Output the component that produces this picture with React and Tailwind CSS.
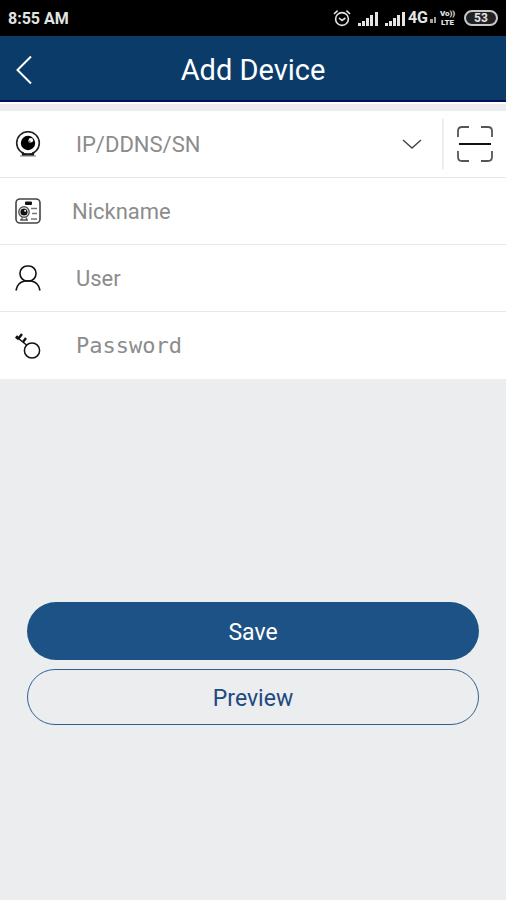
import React from "react";

function StatusBar() {
  return (
    <div className="flex h-9 items-center justify-between bg-black pl-2 pr-2 text-[#e4e4e4]">
      <span className="pt-px text-[16px] leading-5 font-bold">8:55 AM</span>
      <div className="flex items-center">
        <svg className="mr-[7px] h-[18px] w-[18px]" viewBox="0 0 18 18" fill="none" stroke="currentColor" strokeWidth="1.6">
          <circle cx="9" cy="10" r="6.4" />
          <path d="M1 5 4.6 1.6M17 5 13.4 1.6M6 9l3 2.4L12.4 9" />
        </svg>
        <SignalBars />
        <SignalBars />
        <span className="-ml-1 text-[16px] leading-5 font-bold">4G</span>
        <svg className="mx-[2px] mt-1 h-2 w-[7px]" viewBox="0 0 7 8" fill="#a0a0a0">
          <path d="M0 3h3v4H0zM4 1h2v6H4z" />
        </svg>
        <span className="mr-2 flex w-[17px] flex-col items-center text-[8px] leading-[9px] font-black">
          <span>Vo))</span>
          <span>LTE</span>
        </span>
        <span className="flex h-4 w-[34px] items-center justify-center rounded-full border-2 border-[#c8c8c8] bg-[#222] text-[12px] leading-3 font-bold">
          53
        </span>
      </div>
    </div>
  );
}

function SignalBars() {
  return (
    <svg className="mr-[7px] h-[15px] w-5" viewBox="0 0 20 15" fill="currentColor">
      <path d="M0 12h3v3H0zM4 10h3v5H4zM8 7h3v8H8zM12 4h3v11h-3zM17 1h3v14h-3z" />
    </svg>
  );
}

function CameraIcon() {
  return (
    <svg className="h-[26px] w-[26px]" viewBox="0 0 26 26" fill="none">
      <path d="M5 25h16" stroke="#aaa" strokeWidth="1.6" />
      <path d="M7 23.5h12M8 21l-.5 2.500M18 21l.5 2.500" stroke="#111" strokeWidth="1.8" />
      <circle cx="13" cy="12" r="11.3" stroke="#222" strokeWidth="1.6" />
      <circle cx="13" cy="12" r="7.2" fill="#000" />
      <circle cx="15.8" cy="9.2" r="2.3" fill="#fff" />
      <circle cx="14.4" cy="10.6" r="1.2" fill="#777" />
    </svg>
  );
}

function CardIcon() {
  return (
    <svg className="h-[26px] w-[26px]" viewBox="0 0 26 26" fill="none">
      <rect x="1" y="1" width="24" height="24" rx="4" stroke="#444" strokeWidth="1.6" />
      <rect x="10" y="3.5" width="7" height="3.5" rx="1" fill="#111" />
      <circle cx="9" cy="14" r="5.2" stroke="#555" strokeWidth="1.4" />
      <circle cx="9" cy="14" r="3.6" fill="#111" />
      <circle cx="10.2" cy="12.8" r="1" fill="#fff" />
      <path d="M5 22h8M7 19.5v2M11.5 19.5v2" stroke="#555" strokeWidth="1.4" />
      <path d="M16 10.5h6M17 15.5h5M16 21h6" stroke="#777" strokeWidth="1.4" />
    </svg>
  );
}

function UserIcon() {
  return (
    <svg className="h-[26px] w-[26px]" viewBox="0 0 26 26" fill="none" stroke="#111" strokeWidth="1.6">
      <rect x="5" y="1" width="16" height="15" rx="7.2" />
      <path d="M1 25.5C2 19.500 6 16.500 10 16h6c4 .5 8 3.500 9 9.500" />
    </svg>
  );
}

function KeyIcon() {
  return (
    <svg className="h-[26px] w-[26px]" viewBox="0 0 26 26" fill="none" stroke="#111" strokeWidth="1.5">
      <circle cx="17" cy="17.500" r="7.600" />
      <path d="M1 3.500 11.500 12" />
      <path d="M3.500 5.500 7 1M8 9 11 5" strokeWidth="2.400" />
      <path d="M1 3.500 4 6" strokeWidth="3" />
    </svg>
  );
}

const inputStyle =
  "h-full min-w-0 flex-1 bg-transparent text-[22px] text-[#444] outline-none placeholder:text-[#8c8c8c] placeholder:opacity-100";

function Field({ id, icon, type = "text", placeholder, indent = "pl-[35px]", font = "", children }) {
  return (
    <div className="flex h-[67px] items-center border-b border-[#e6e8e9] pl-[15px] last:border-b-0">
      <label htmlFor={id} aria-label={placeholder}>
        {icon}
      </label>
      <input id={id} type={type} placeholder={placeholder} className={`${inputStyle} ${indent} ${font}`} />
      {children}
    </div>
  );
}

export default function App() {
  return (
    <div className="flex min-h-screen flex-col bg-[#ebedef] font-['Roboto',sans-serif]">
      <StatusBar />
      <header className="grid h-[66px] grid-cols-[48px_1fr_48px] items-center border-b-2 border-[#06115c] bg-[#0b3b69] text-white">
        <button type="button" aria-label="Back" className="flex h-full items-center pt-1 pl-4">
          <svg className="h-[30px] w-4" viewBox="0 0 16 30" fill="none" stroke="currentColor" strokeWidth="2">
            <path d="M15 1.500 1.500 15 15 28.500" />
          </svg>
        </button>
        <h1 className="pt-1 text-center text-[29px] leading-9">Add Device</h1>
      </header>
      <form className="flex flex-1 flex-col border-t-2 border-white" onSubmit={(e) => e.preventDefault()}>
        <div className="border-t-[7px] border-[#ebedef] bg-white">
          <Field id="address" icon={<CameraIcon />} placeholder="IP/DDNS/SN">
            <button type="button" aria-label="Saved devices" className="flex h-full w-[60px] items-center justify-center">
              <svg className="h-[10px] w-5" viewBox="0 0 20 10" fill="none" stroke="#444" strokeWidth="1.400">
                <path d="M1 1l9 8 9-8" />
              </svg>
            </button>
            <button type="button" aria-label="Scan code" className="flex h-[50px] w-16 items-center justify-center border-l-2 border-[#eceeef]">
              <svg className="h-9 w-9" viewBox="0 0 36 36" fill="none" stroke="#555" strokeWidth="1.800">
                <path d="M1 11V5q0-4 4-4h7M24 1h7q4 0 4 4v6M1 25v6q0 4 4 4h7M24 35h7q4 0 4-4v-6" />
                <path d="M2 18h32" stroke="#111" strokeWidth="2" />
              </svg>
            </button>
          </Field>
          <Field id="nickname" icon={<CardIcon />} placeholder="Nickname" indent="pl-[31px]" />
          <Field id="user" icon={<UserIcon />} placeholder="User" />
          <Field
            id="password"
            type="password"
            icon={<KeyIcon />}
            placeholder="Password"
            font="font-['DejaVu_Sans_Mono',monospace]"
          />
        </div>
        <div className="mt-[223px] flex flex-col gap-[9px] px-[27px] text-[23px] leading-7">
          <button type="submit" className="h-[58px] rounded-full bg-[#1d5286] pt-1 text-white">
            Save
          </button>
          <button type="button" className="h-14 rounded-full border border-[#345f95] pt-1 text-[#20497f]">
            Preview
          </button>
        </div>
      </form>
    </div>
  );
}
